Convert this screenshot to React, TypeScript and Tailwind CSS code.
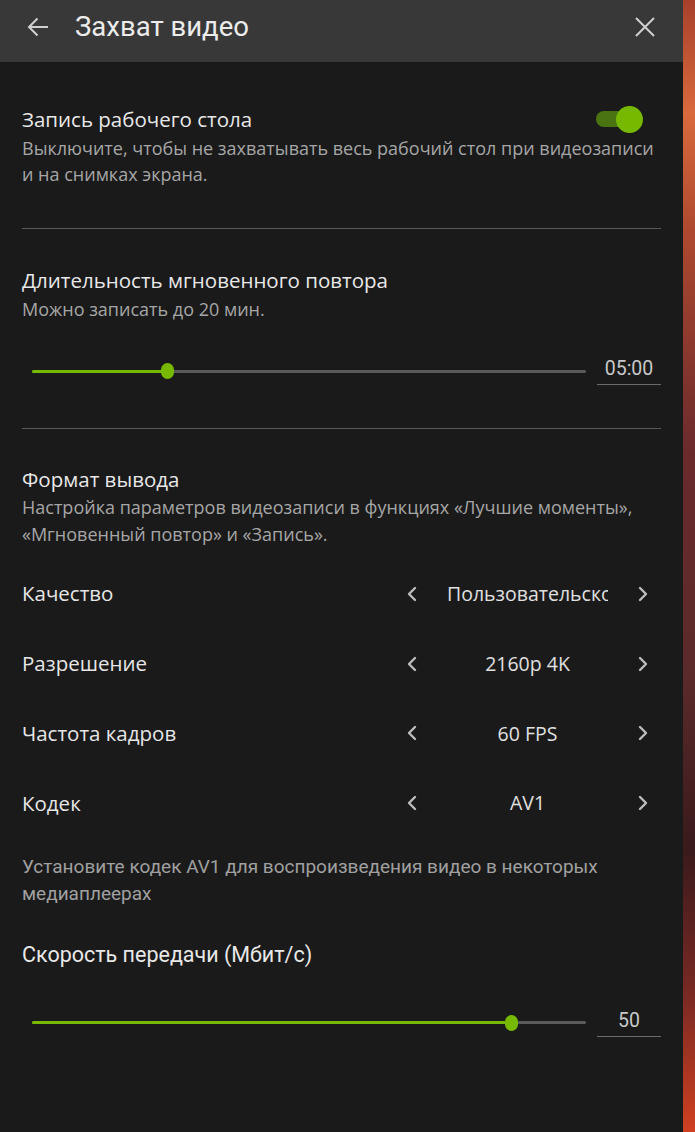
const body = "font-['Open_Sans',sans-serif]";
const rob = "font-['Roboto',sans-serif]";

function Chevron({ dir }: { dir: "left" | "right" }) {
  return (
    <svg width="20" height="16" viewBox="0 0 20 16" className="shrink-0">
      <polyline
        points={dir === "left" ? "13,2 7,8 13,14" : "7,2 13,8 7,14"}
        fill="none"
        stroke="#bdbdbd"
        strokeWidth="2.4"
        strokeLinecap="round"
        strokeLinejoin="round"
      />
    </svg>
  );
}

function Slider({ pct, value }: { pct: number; value: string }) {
  return (
    <div className="flex items-center pl-[32px] pr-[22px]">
      <div className="relative mr-[11px] h-[16px] flex-1">
        <div className="absolute left-0 right-0 top-[6.5px] h-[3px] rounded-full bg-[#5a5a5a]" />
        <div className="absolute left-0 top-[6.5px] h-[3px] rounded-full bg-[#76b900]" style={{ width: `${pct}%` }} />
        <div className="absolute top-0 -ml-[6.5px] h-[16px] w-[13px] rounded-full bg-[#76b900]" style={{ left: `${pct}%` }} />
      </div>
      <div className={`w-[64px] border-b border-[#6a6a6a] pb-[3px] text-center text-[19.5px] leading-[24px] text-[#c8c8c8] ${rob}`}>
        {value}
      </div>
    </div>
  );
}

function Row({ label, value }: { label: string; value: string }) {
  return (
    <div className="flex h-[69.7px] items-center pl-[22px] pr-[30px]">
      <div className={`flex-1 text-[20.5px] text-[#e6e6e6] ${body}`}>{label}</div>
      <Chevron dir="left" />
      <div className={`mx-[25px] w-[161px] overflow-hidden whitespace-nowrap text-center text-[19.5px] text-[#e0e0e0] ${body}`}>
        {value}
      </div>
      <Chevron dir="right" />
    </div>
  );
}

export default function App() {
  return (
    <div className="flex h-[1132px] w-[695px] overflow-hidden">
      <div className="flex w-[683px] flex-col bg-[#1a1a1a]">
        <div className="flex h-[62px] items-center bg-[#383838] pb-[8px] pl-[27px] pr-[28px]">
          <svg width="22" height="20" viewBox="0 0 22 20" className="shrink-0">
            <path d="M21 10H2M10.5 1.5L2 10l8.5 8.5" fill="none" stroke="#cfcfcf" strokeWidth="2" />
          </svg>
          <div className={`ml-[26px] flex-1 text-[27.5px] leading-[32px] text-[#ececec] ${rob}`}>Захват видео</div>
          <svg width="20" height="20" viewBox="0 0 20 20" className="shrink-0">
            <path d="M1 1l18 18M19 1L1 19" fill="none" stroke="#cfcfcf" strokeWidth="2" />
          </svg>
        </div>

        <div className="px-[22px] pt-[43px]">
          <div className="flex h-[28px] items-center justify-between">
            <div className={`text-[20.5px] leading-[28px] text-[#e8e8e8] ${body}`}>Запись рабочего стола</div>
            <div className="relative mr-[18px] h-[27px] w-[47px]">
              <div className="absolute left-0 top-[5.5px] h-[16px] w-[34px] rounded-full bg-[#4a7412]" />
              <div className="absolute right-0 top-0 h-[27px] w-[27px] rounded-full bg-[#76b900]" />
            </div>
          </div>
          <div className={`mt-[2px] text-[18px] leading-[26px] text-[#a6a6a6] ${body}`}>
            Выключите, чтобы не захватывать весь рабочий стол при видеозаписи
            <br />и на снимках экрана.
          </div>
          <div className="mt-[41px] h-px bg-[#5a5a5a]" />
        </div>

        <div className="px-[22px] pt-[37px]">
          <div className={`text-[20.5px] leading-[28px] text-[#e8e8e8] ${body}`}>Длительность мгновенного повтора</div>
          <div className={`mt-[2px] text-[18px] leading-[26px] text-[#a6a6a6] ${body}`}>Можно записать до 20 мин.</div>
        </div>
        <div className="mt-[35px]">
          <Slider pct={24.4} value="05:00" />
        </div>
        <div className="px-[22px] pt-[43px]">
          <div className="h-px bg-[#5a5a5a]" />
        </div>

        <div className="px-[22px] pt-[36px]">
          <div className={`text-[20.5px] leading-[28px] text-[#e8e8e8] ${body}`}>Формат вывода</div>
          <div className={`mt-[1px] text-[18px] leading-[27px] text-[#a6a6a6] ${body}`}>
            Настройка параметров видеозаписи в функциях «Лучшие моменты»,
            <br />
            «Мгновенный повтор» и «Запись».
          </div>
        </div>

        <div className="mt-[11px]">
          <Row label="Качество" value="Пользовательское" />
          <Row label="Разрешение" value="2160p 4K" />
          <Row label="Частота кадров" value="60 FPS" />
          <Row label="Кодек" value="AV1" />
        </div>

        <div className={`mt-[15px] px-[22px] text-[19px] leading-[27px] text-[#a0a0a0] ${rob}`}>
          Установите кодек AV1 для воспроизведения видео в некоторых
          <br />
          медиаплеерах
        </div>
        <div className={`mt-[34px] px-[22px] text-[21.5px] leading-[28px] text-[#e8e8e8] ${rob}`}>Скорость передачи (Мбит/с)</div>
        <div className="mt-[40px]">
          <Slider pct={86.6} value="50" />
        </div>
      </div>
      <div className="w-[12px] bg-[linear-gradient(180deg,#a8402c_0%,#d86a3c_10%,#b04a30_20%,#6a2a2c_40%,#5a2a2a_60%,#3a1a1c_75%,#7a2a24_88%,#d04020_100%)]" />
    </div>
  );
}
